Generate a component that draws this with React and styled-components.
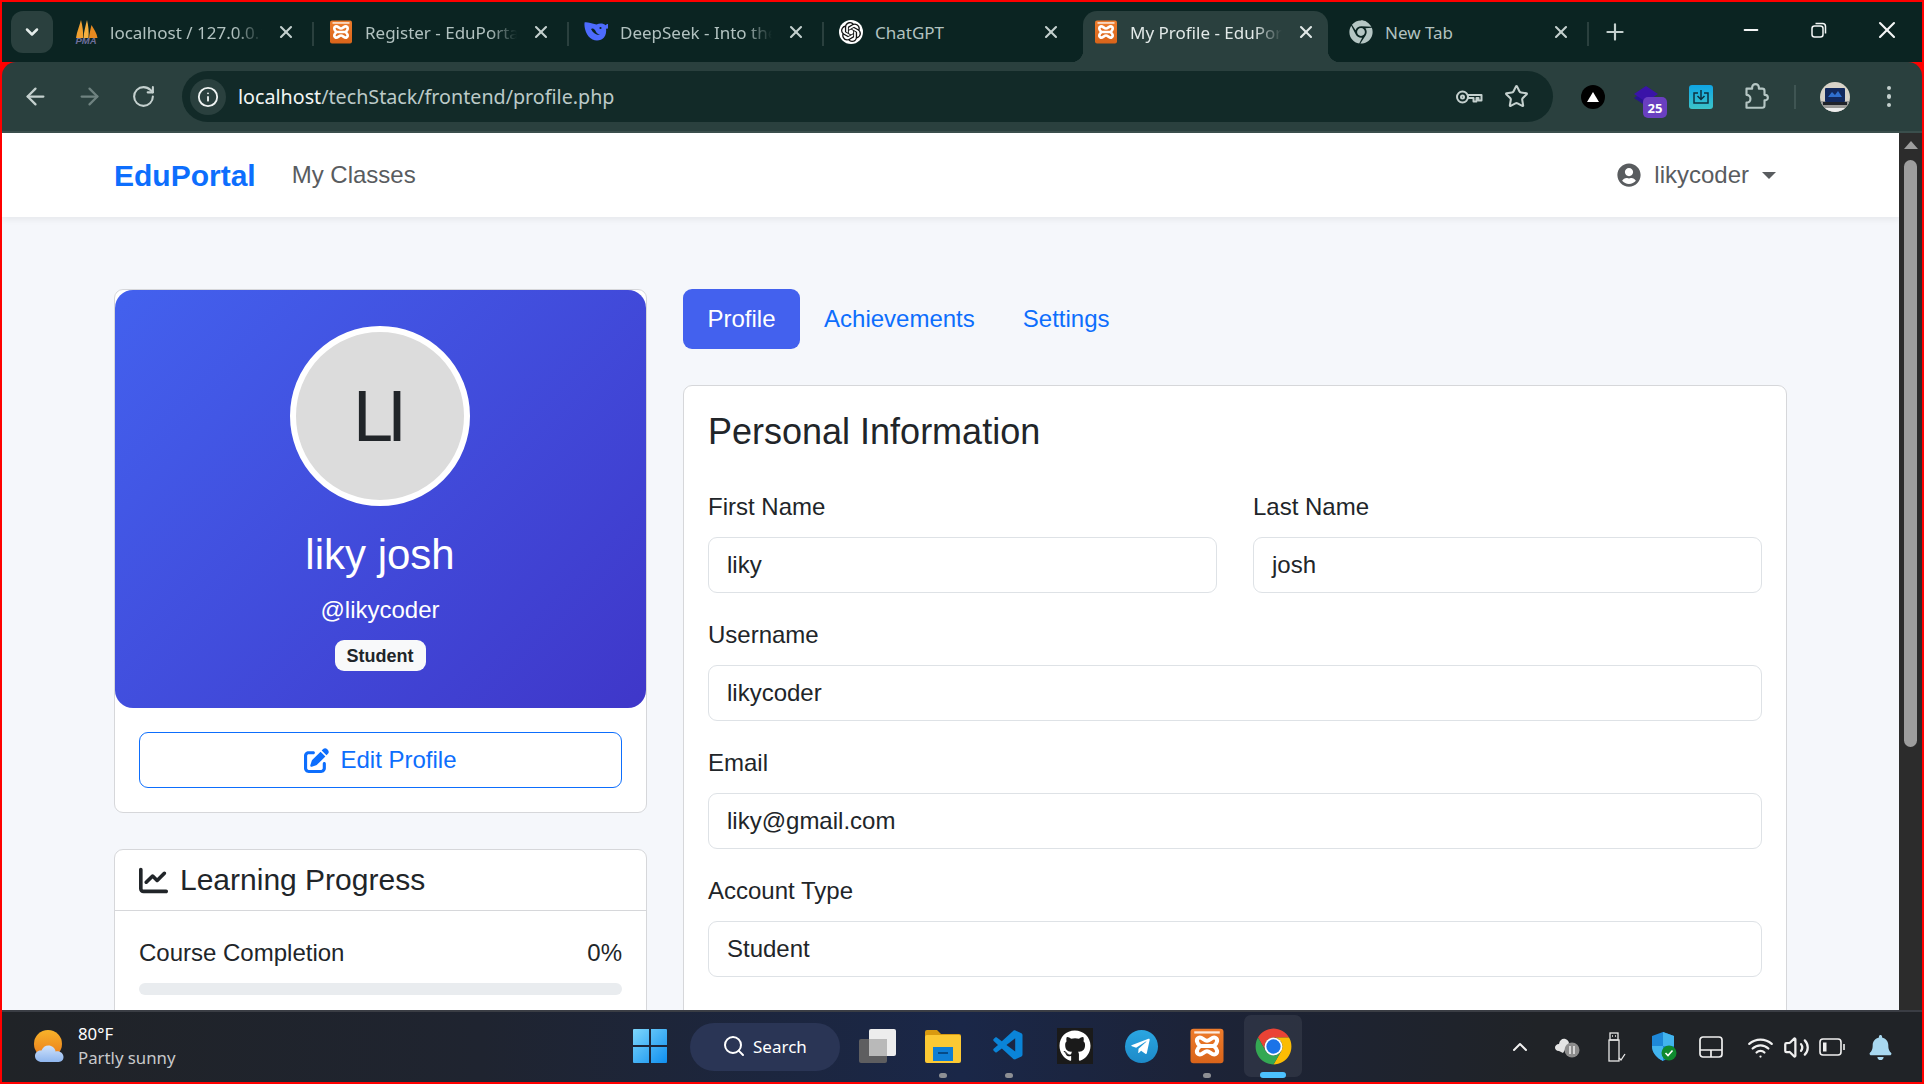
import React from "react";
import styled, { createGlobalStyle } from "styled-components";
import {
  ArrowLeft,
  ArrowRight,
  RotateCw,
  Info,
  Star,
  ChevronDown,
  ChevronUp,
  X,
  Plus,
  Minus,
  Search,
  Wifi,
  Volume2
} from "lucide-react";
import {
  FaUserCircle,
  FaGithub,
  FaTelegramPlane,
  FaChrome,
  FaBell
} from "react-icons/fa";
import { FaPenToSquare, FaChartLine } from "react-icons/fa6";
import { SiOpenai } from "react-icons/si";
import { VscVscode } from "react-icons/vsc";

const UI_FONT = `"Noto Sans", "Open Sans", sans-serif`;
const PAGE_FONT = `"Liberation Sans", Arial, sans-serif`;

const GlobalStyle = createGlobalStyle`
  html, body {
    margin: 0;
    padding: 0;
    overflow: hidden;
    background: #ff0000;
  }
  * { box-sizing: border-box; }
`;

/* ---------- logos ---------- */

const Xampp = ({ size = 24 }) => (
  <svg width={size} height={size} viewBox="0 0 24 24">
    <defs>
      <linearGradient id="xamppBg" x1="0" y1="0" x2="0" y2="1">
        <stop offset="0" stopColor="#ee7c2c" />
        <stop offset="1" stopColor="#d9641a" />
      </linearGradient>
    </defs>
    <rect x="1" y="0.5" width="22" height="23" rx="2" fill="url(#xamppBg)" />
    <path
      d="M6.5 6.5C8.5 5.5 10 8.500 12 8.500s3.500-3 5.500-2 1.500 3.500-1 5.500c2.500 2 3 4.500 1 5.500s-3.500-2-5.500-2-3.500 3-5.500 2-1.500-3.500 1-5.500c-2.500-2-3-4.500-1-5.500zM8 12h8"
      fill="none"
      stroke="#fff"
      strokeWidth="2.700"
      strokeLinejoin="round"
    />
    <rect x="3.500" y="2.200" width="17" height="1.500" fill="#fff" opacity="0.85" />
  </svg>
);

const Pma = () => (
  <svg width="26" height="25" viewBox="0 0 26 25">
    <path d="M3 18 C4 11 6.500 6 8 0 C9.500 6 10.500 12 10 18 Z" fill="#f0a030" />
    <path d="M10.500 18 C11 11 12.500 6 14 0 C15.500 6 16 12 15.500 18 Z" fill="#f5b040" />
    <path d="M16 18 C16.500 13 17.500 9 18.500 5 C21 9 24 14 24.500 18 Z" fill="#e88a20" />
    <text x="13" y="24" textAnchor="middle" fontFamily={PAGE_FONT} fontWeight="700" fontStyle="italic" fontSize="9.500" fill="#6f6f9c">
      PMA
    </text>
  </svg>
);

const Whale = () => (
  <svg width="26" height="24" viewBox="0 0 26 24">
    <path
      d="M25 4c-1 0-1.600.6-2.300 1.200C20.500 3.500 17 3 13.500 4.500 8 3 3 1.500 1.500 2.500 1 8 3 16 9.500 19.500c4 2 9 1 11.500-2 2-2.500 2.500-6 2-9 1 .5 2 .1 2-.8z"
      fill="#4d6bfe"
    />
    <path d="M8 9c2 4 5 6 9 6-3-1-4-3-5-5-1-1.500-3-2-4-1z" fill="#0b2422" />
    <circle cx="17.500" cy="8" r="1.100" fill="#0b2422" />
  </svg>
);

const ChromeLogo = ({ size = 36 }) => (
  <svg width={size} height={size} viewBox="0 0 48 48">
    <path d="M6.680 14A20 20 0 0 1 41.320 14H24A10 10 0 0 0 15.340 29Z" fill="#ea4335" />
    <path d="M41.320 14A20 20 0 0 1 24 44L32.660 29A10 10 0 0 0 24 14Z" fill="#fbbc04" />
    <path d="M24 44A20 20 0 0 1 6.680 14L15.340 29A10 10 0 0 0 32.660 29Z" fill="#34a853" />
    <circle cx="24" cy="24" r="10" fill="#fff" />
    <circle cx="24" cy="24" r="8" fill="#1a73e8" />
  </svg>
);

const KeyIcon = () => (
  <svg width="28" height="18" viewBox="0 0 28 18" fill="none" stroke="#c4d0ce" strokeWidth="2">
    <circle cx="7.500" cy="9" r="5.500" />
    <circle cx="7.500" cy="9" r="1.500" />
    <path d="M13 7h13.500v5.500h-3V10h-2v3.500h-3V10H13" strokeLinejoin="round" />
  </svg>
);

const Puzzle = () => (
  <svg width="27" height="27" viewBox="0 0 24 24" fill="none" stroke="#b5c6c4" strokeWidth="1.900" strokeLinejoin="round">
    <path d="M4 5h5V4a3 3 0 0 1 6 0v1h3a2 2 0 0 1 2 2v3.500h.5a2.500 2.500 0 0 1 0 5H20V20a2 2 0 0 1-2 2H4v-4.500c2.500 0 3.500-1.500 3.500-3.500S6 10.500 4 10.500z" />
  </svg>
);

const StackBadge = () => (
  <svg width="26" height="24" viewBox="0 0 26 24">
    <path d="M0 13 L9 7 L18 13 L9 19 Z" fill="#27158f" />
    <path d="M0 9 L12 1 L24 9 L12 17 Z" fill="#3a13a8" />
  </svg>
);

const SaveExt = () => (
  <svg width="24" height="24" viewBox="0 0 24 24">
    <defs>
      <linearGradient id="saveBg" x1="0" y1="0" x2="0" y2="1">
        <stop offset="0" stopColor="#0fa5e4" />
        <stop offset="1" stopColor="#3cc4c8" />
      </linearGradient>
    </defs>
    <rect width="24" height="24" rx="3" fill="url(#saveBg)" />
    <path d="M9 8H5v10h14V8h-4M12 5v9M8.500 11l3.500 3.500 3.500-3.500" fill="none" stroke="#0d3040" strokeWidth="1.500" />
  </svg>
);

const ProfilePhoto = () => (
  <svg width="30" height="30" viewBox="0 0 30 30">
    <defs>
      <clipPath id="photoClip">
        <circle cx="15" cy="15" r="15" />
      </clipPath>
    </defs>
    <g clipPath="url(#photoClip)">
      <rect width="30" height="30" fill="#d8d3c8" />
      <rect y="19" width="30" height="11" fill="#9a9a98" />
      <rect x="5" y="6" width="20" height="14" rx="1" fill="#12295e" />
      <path d="M8 15l4-5 3 3 3-4 4 6z" fill="#2f6fd0" />
      <rect x="3" y="20" width="24" height="3" fill="#20232a" />
      <rect y="26" width="30" height="4" fill="#eeeeee" />
    </g>
  </svg>
);

const WeatherIcon = () => (
  <svg width="36" height="36" viewBox="0 0 36 36">
    <defs>
      <linearGradient id="sunFill" x1="0" y1="0" x2="0" y2="1">
        <stop offset="0" stopColor="#f8b32a" />
        <stop offset="1" stopColor="#ea7a1c" />
      </linearGradient>
      <linearGradient id="cloudFill" x1="0" y1="0" x2="0" y2="1">
        <stop offset="0" stopColor="#cfe2fb" />
        <stop offset="1" stopColor="#8fb6ee" />
      </linearGradient>
    </defs>
    <circle cx="16" cy="15" r="14" fill="url(#sunFill)" />
    <path d="M10 33c-4 0-7-2.500-7-6s3-6 6.500-5.500C11 17.500 15 15.500 19 17c3 1 4.500 3.500 4.500 5.500 4-1 8 1.500 8 5.500s-3 5-6 5z" fill="url(#cloudFill)" />
  </svg>
);

const WindowsLogo = () => (
  <svg width="36" height="36" viewBox="0 0 36 36">
    <defs>
      <linearGradient id="winFill" x1="0" y1="0" x2="1" y2="1">
        <stop offset="0" stopColor="#7dd6fb" />
        <stop offset="1" stopColor="#0f8ff0" />
      </linearGradient>
    </defs>
    <path d="M1 2a1 1 0 0 1 1-1h15v16H1zM19 1h15a1 1 0 0 1 1 1v15H19zM1 19h16v16H2a1 1 0 0 1-1-1zM19 19h16v15a1 1 0 0 1-1 1H19z" fill="url(#winFill)" />
  </svg>
);

const TaskView = () => (
  <svg width="38" height="34" viewBox="0 0 38 34">
    <rect x="1" y="10" width="28" height="24" rx="2" fill="#5e5e60" />
    <rect x="11" y="0" width="27" height="27" rx="2" fill="#ededed" />
    <rect x="11" y="10" width="18" height="17" fill="#b9b9b9" />
  </svg>
);

const Folder = () => (
  <svg width="38" height="34" viewBox="0 0 38 34">
    <path d="M1 3a2 2 0 0 1 2-2h10l4 4h18a2 2 0 0 1 2 2v5H1z" fill="#d99a10" />
    <rect x="1" y="6" width="36" height="28" rx="2" fill="#fcc934" />
    <path d="M9 18h20v14H9z" fill="#0f7ed4" />
    <rect x="14" y="23" width="10" height="2" fill="#064a86" />
  </svg>
);

const CloudTray = () => (
  <svg width="26" height="24" viewBox="0 0 26 24">
    <path d="M5 16c-3 0-4-2-4-3.500S2.500 9 5 9c.5-4 3.500-6 6.500-5 2 .6 3.500 2.500 3.500 4.500L9 18z" fill="#e4e4e4" />
    <circle cx="18" cy="15" r="7.500" fill="#8d8d8d" />
    <path d="M16 11v8M20 11v8" stroke="#e8e8e8" strokeWidth="1.600" />
  </svg>
);

const UsbTray = () => (
  <svg width="22" height="30" viewBox="0 0 22 30" fill="none" stroke="#e8e8e8" strokeWidth="1.300">
    <rect x="3" y="8" width="10" height="21" />
    <rect x="4" y="1" width="8" height="7" />
    <path d="M6 4h1M9 4h1M13 26l2 2 4-6" />
  </svg>
);

const ShieldTray = () => (
  <svg width="26" height="30" viewBox="0 0 26 30">
    <path d="M12 0l11 4v10c0 7-5 12-11 15C6 26 1 21 1 14V4z" fill="#1e88d8" />
    <path d="M12 0l11 4v10H12zM12 14v15C6 26 1 21 1 14z" fill="#42b4ee" />
    <circle cx="18" cy="21" r="7.500" fill="#0f8a2e" />
    <path d="M14.500 21l2.500 2.500 4.500-5" stroke="#fff" strokeWidth="1.600" fill="none" />
  </svg>
);

const PadTray = () => (
  <svg width="24" height="22" viewBox="0 0 24 22" fill="none" stroke="#f0f0f0" strokeWidth="1.700">
    <rect x="1" y="1" width="22" height="20" rx="3" />
    <path d="M1 14h22M12 14v7" />
  </svg>
);

const BatteryTray = () => (
  <svg width="26" height="18" viewBox="0 0 26 18" fill="none" stroke="#f0f0f0" strokeWidth="1.600">
    <rect x="1" y="1" width="21" height="16" rx="3" />
    <path d="M25 6v6" />
    <rect x="4" y="4.500" width="3.500" height="9" fill="#f0f0f0" stroke="none" />
  </svg>
);

/* ---------- browser chrome ---------- */

const Frame = styled.div`
  width: 1924px;
  height: 1084px;
  padding: 2px;
  background: #ff0000;
  display: flex;
  flex-direction: column;
  overflow: hidden;
`;

const TabStrip = styled.div`
  height: 60px;
  flex: none;
  background: #0b2422;
  display: flex;
  align-items: flex-start;
  font-family: ${UI_FONT};
`;

const TabSearch = styled.div`
  width: 42px;
  height: 42px;
  margin: 9px 10px 0 9px;
  flex: none;
  border-radius: 12px;
  background: #2a403e;
  color: #e4ecea;
  display: flex;
  align-items: center;
  justify-content: center;
`;

const TabSlot = styled.div`
  width: 255px;
  height: 60px;
  flex: none;
  display: flex;
  align-items: flex-start;
  padding-top: 9px;
`;

const Tab = styled.div`
  position: relative;
  width: 245px;
  height: 51px;
  flex: none;
  padding: 0 12px 9px 10px;
  display: flex;
  align-items: center;
  border-radius: 14px 14px 0 0;
  background: ${props => (props.$active ? "#2a403e" : "transparent")};
  ${props =>
    props.$active &&
    `
    &::before, &::after {
      content: "";
      position: absolute;
      bottom: 0;
      width: 12px;
      height: 12px;
    }
    &::before { left: -12px; background: radial-gradient(circle at 0 0, transparent 12px, #2a403e 12.5px); }
    &::after { right: -12px; background: radial-gradient(circle at 100% 0, transparent 12px, #2a403e 12.5px); }
  `}
`;

const Favicon = styled.span`
  width: 26px;
  height: 30px;
  flex: none;
  display: flex;
  align-items: center;
  justify-content: center;
`;

const GptDisc = styled.span`
  width: 24px;
  height: 24px;
  border-radius: 50%;
  background: #fff;
  color: #111;
  display: flex;
  align-items: center;
  justify-content: center;
`;

const TabTitle = styled.span`
  flex: 1;
  min-width: 0;
  margin-left: 11px;
  font-size: 17px;
  white-space: nowrap;
  overflow: hidden;
  color: ${props => (props.$active ? "#e2e9e8" : "#b2c2c0")};
  mask-image: ${props =>
    props.$fade ? "linear-gradient(to right, #000 82%, transparent 100%)" : "none"};
`;

const TabClose = styled.span`
  width: 20px;
  height: 20px;
  margin-left: 14px;
  flex: none;
  color: ${props => (props.$active ? "#e2e9e8" : "#c4d0ce")};
  display: flex;
  align-items: center;
  justify-content: center;
`;

const TabSep = styled.span`
  width: 2px;
  height: 24px;
  margin: 11px 4px 0 4px;
  flex: none;
  background: ${props => (props.$hidden ? "transparent" : "#2a403e")};
`;

const NewTab = styled.div`
  width: 34px;
  height: 34px;
  margin: 13px 0 0 5px;
  flex: none;
  color: #c4d0ce;
  display: flex;
  align-items: center;
  justify-content: center;
`;

const WindowControls = styled.div`
  margin-left: auto;
  display: flex;
  color: #f4f6f6;
  margin-right: 1px;
`;

const WindowButton = styled.div`
  width: 68px;
  height: 60px;
  padding-bottom: 4px;
  display: flex;
  align-items: center;
  justify-content: center;
`;

const RestoreIcon = () => (
  <svg width="16" height="16" viewBox="0 0 16 16" fill="none" stroke="#f4f6f6" strokeWidth="1.500">
    <rect x="1" y="4" width="11" height="11" rx="2.500" />
    <path d="M4.500 1.500h7a3 3 0 0 1 3 3v7" />
  </svg>
);

const Toolbar = styled.div`
  height: 71px;
  flex: none;
  background: #2a403e;
  border-radius: 14px 14px 0 0;
  border-bottom: 2px solid #3a4e4c;
  padding: 9px 6px 9px 6px;
  display: flex;
  align-items: center;
  font-family: ${UI_FONT};
`;

const ToolButton = styled.div`
  width: 54px;
  height: 51px;
  flex: none;
  position: relative;
  display: flex;
  align-items: center;
  justify-content: center;
  color: ${props => (props.$dim ? "#6f8280" : "#c4d0ce")};
`;

const Omnibox = styled.div`
  flex: 1;
  height: 51px;
  margin: 0 13px 0 12px;
  border-radius: 26px;
  background: #122a28;
  padding: 0 24px 0 8px;
  display: flex;
  align-items: center;
`;

const SiteInfo = styled.div`
  width: 36px;
  height: 36px;
  border-radius: 50%;
  background: #2a403e;
  color: #f0f4f3;
  display: flex;
  align-items: center;
  justify-content: center;
  flex: none;
`;

const Url = styled.div`
  margin-left: 12px;
  font-size: 19.700px;
  color: #bccac8;
  white-space: nowrap;
  flex: 1;
`;

const UrlHost = styled.span`
  color: #f2f6f5;
`;

const OmniIcon = styled.span`
  margin-left: ${props => props.$gap || 0}px;
  color: #c4d0ce;
  display: flex;
  align-items: center;
`;

const BlackDot = styled.span`
  width: 24px;
  height: 24px;
  border-radius: 50%;
  background: #000;
  display: flex;
  align-items: center;
  justify-content: center;
  &::after {
    content: "";
    border-left: 6px solid transparent;
    border-right: 6px solid transparent;
    border-bottom: 10px solid #fff;
  }
`;

const CountBadge = styled.span`
  position: absolute;
  left: 23px;
  top: 26px;
  width: 24px;
  height: 21px;
  border-radius: 5px;
  background: #6a3fc0;
  color: #fff;
  font-size: 13px;
  font-weight: 700;
  display: flex;
  align-items: center;
  justify-content: center;
`;

const ToolSep = styled.span`
  width: 2px;
  height: 24px;
  margin: 0 12px 0 12px;
  flex: none;
  background: #3f5553;
`;

const Dots = styled.span`
  display: flex;
  flex-direction: column;
  gap: 4px;
  & > i {
    width: 4.500px;
    height: 4.500px;
    border-radius: 50%;
    background: #c4d0ce;
  }
`;

/* ---------- page ---------- */

const Viewport = styled.div`
  flex: 1;
  min-height: 0;
  display: flex;
`;

const Page = styled.div`
  flex: 1;
  min-width: 0;
  overflow: hidden;
  background: #f5f7fb;
  font-family: ${PAGE_FONT};
  font-size: 24px;
  line-height: 36px;
  color: #212529;
`;

const Scrollbar = styled.div`
  width: 23px;
  flex: none;
  background: #2c2c2c;
  padding: 8px 5px 0 5px;
  display: flex;
  flex-direction: column;
  align-items: center;
`;

const ScrollArrow = styled.span`
  border-left: 7px solid transparent;
  border-right: 7px solid transparent;
  border-bottom: 8px solid #9e9e9e;
`;

const ScrollThumb = styled.div`
  width: 13px;
  height: 587px;
  margin-top: 11px;
  border-radius: 7px;
  background: #9e9e9e;
`;

const Navbar = styled.nav`
  height: 84px;
  padding: 0 112px;
  background: #fff;
  box-shadow: 0 3px 6px rgba(0, 0, 0, 0.06);
  display: flex;
  align-items: center;
`;

const Brand = styled.div`
  font-size: 30px;
  font-weight: 700;
  color: #0d6efd;
  margin-top: 2px;
`;

const NavLink = styled.div`
  margin-left: 36px;
  color: #595c5f;
`;

const UserMenu = styled.div`
  margin-left: auto;
  padding-right: 11px;
  display: flex;
  align-items: center;
  color: #595c5f;
`;

const UserName = styled.span`
  margin-left: 13px;
`;

const Caret = styled.span`
  margin-left: 13px;
  border-left: 7px solid transparent;
  border-right: 7px solid transparent;
  border-top: 7px solid #595c5f;
`;

const Content = styled.div`
  padding: 72px 112px 0;
  display: grid;
  grid-template-columns: 533px 1fr;
  column-gap: 36px;
  align-items: start;
`;

const Card = styled.section`
  background: #fff;
  border: 1px solid #d6d7da;
  border-radius: 9px;
  margin-bottom: 36px;
`;

const Hero = styled.div`
  height: 418px;
  padding: 36px 1px 0 0;
  border-radius: 18px;
  background: linear-gradient(135deg, #4361ee, #3f37c9);
  color: #fff;
  display: flex;
  flex-direction: column;
  align-items: center;
`;

const Avatar = styled.div`
  width: 180px;
  height: 180px;
  flex: none;
  border-radius: 50%;
  border: 6px solid #fff;
  background: #dcdcdc;
  color: #212529;
  font-size: 72px;
  letter-spacing: -6px;
  padding-right: 6px;
  display: flex;
  align-items: center;
  justify-content: center;
`;

const HeroName = styled.h3`
  margin: 24px 0 12px;
  font-size: 42px;
  font-weight: 400;
  line-height: 50px;
`;

const HeroHandle = styled.div`
  margin-bottom: 12px;
`;

const Badge = styled.span`
  height: 31px;
  width: 91px;
  border-radius: 9px;
  background: #f8f9fa;
  color: #212529;
  font-size: 18px;
  font-weight: 700;
  line-height: 33px;
  text-align: center;
`;

const CardActions = styled.div`
  padding: 24px;
`;

const EditButton = styled.div`
  height: 56px;
  border: 1px solid #0d6efd;
  border-radius: 9px;
  color: #0d6efd;
  display: flex;
  align-items: center;
  justify-content: center;
  gap: 11px;
`;

const CardHeader = styled.div`
  height: 61px;
  padding: 0 24px;
  border-bottom: 1px solid #d6d7da;
  display: flex;
  align-items: center;
  gap: 12px;
  font-size: 30px;
`;

const CardBody = styled.div`
  padding: 24px;
`;

const ProgressRow = styled.div`
  display: flex;
  justify-content: space-between;
  margin-bottom: 12px;
`;

const ProgressBar = styled.div`
  height: 12px;
  border-radius: 6px;
  background: #e9ecef;
`;

const Tabs = styled.div`
  display: flex;
  margin-bottom: 36px;
`;

const Pill = styled.div`
  height: 60px;
  padding: 12px ${props => (props.$active ? 24.5 : 24)}px;
  border-radius: 9px;
  background: ${props => (props.$active ? "#4361ee" : "transparent")};
  color: ${props => (props.$active ? "#fff" : "#0d6efd")};
`;

const FormCard = styled(Card)`
  padding: 24px;
`;

const FormTitle = styled.h4`
  margin: 0 0 36px;
  font-size: 36px;
  font-weight: 400;
  line-height: 43px;
`;

const FormRow = styled.div`
  display: grid;
  grid-template-columns: 1fr 1fr;
  column-gap: 36px;
`;

const Field = styled.div`
  margin-bottom: 24px;
`;

const Label = styled.div`
  margin-bottom: 12px;
`;

const FieldValue = styled.div`
  height: 56px;
  padding: 0 18px;
  border: 1px solid #dee2e6;
  border-radius: 9px;
  background: #fff;
  line-height: 54px;
`;

/* ---------- taskbar ---------- */

const Taskbar = styled.div`
  height: 72px;
  flex: none;
  border-top: 2px solid #3a3d44;
  background: linear-gradient(90deg, #202327 0%, #1f2430 25%, #1a2748 50%, #1c2338 62%, #202327 80%);
  padding-left: 615px;
  position: relative;
  display: flex;
  align-items: center;
  font-family: ${UI_FONT};
  color: #fff;
`;

const Weather = styled.div`
  position: absolute;
  left: 30px;
  top: 0;
  height: 70px;
  display: flex;
  align-items: center;
  gap: 10px;
`;

const WeatherText = styled.div`
  font-size: 16.800px;
  line-height: 24px;
  padding-bottom: 2px;
`;

const WeatherNote = styled.div`
  color: #c8c9cb;
`;

const AppSlot = styled.div`
  width: ${props => (props.$active ? 58 : 66)}px;
  height: 62px;
  flex: none;
  border-radius: 7px;
  position: relative;
  display: flex;
  align-items: center;
  justify-content: center;
  margin: 0 ${props => (props.$active ? 4 : 0)}px 2px;
  background: ${props => (props.$active ? "rgba(255,255,255,0.07)" : "transparent")};
`;

const RunDot = styled.span`
  position: absolute;
  bottom: -1px;
  left: 50%;
  margin-left: ${props => (props.$wide ? -13 : -4)}px;
  width: ${props => (props.$wide ? 26 : 8)}px;
  height: ${props => (props.$wide ? 6 : 5)}px;
  border-radius: 3px;
  background: ${props => (props.$wide ? "#4cc2ff" : "#8d8f94")};
`;

const SearchPill = styled.div`
  width: 150px;
  height: 48px;
  margin: 0 4px 0 7px;
  flex: none;
  border-radius: 24px;
  background: #2a3555;
  padding: 0 0 2px 32px;
  display: flex;
  align-items: center;
  gap: 7px;
  font-size: 17px;
`;

const GithubTile = styled.span`
  width: 36px;
  height: 36px;
  background: #1a1a1a;
  color: #fff;
  display: flex;
  align-items: center;
  justify-content: center;
`;

const TelegramDot = styled.span`
  width: 33px;
  height: 33px;
  border-radius: 50%;
  background: linear-gradient(#2aa6e2, #1d8ac8);
  color: #fff;
  display: flex;
  align-items: center;
  justify-content: center;
  padding-right: 2px;
`;

const Tray = styled.div`
  margin-left: auto;
  margin-right: 16px;
  display: flex;
  align-items: center;
  color: #f0f0f0;
`;

const TrayItem = styled.div`
  width: ${props => props.$w}px;
  height: 48px;
  display: flex;
  align-items: center;
  justify-content: center;
`;

const tabs = [
  { title: "localhost / 127.0.0.1", icon: <Pma />, fade: true },
  { title: "Register - EduPortal", icon: <Xampp />, fade: true },
  { title: "DeepSeek - Into the Unknown", icon: <Whale />, fade: true },
  { title: "ChatGPT", icon: <GptDisc><SiOpenai size={20} /></GptDisc> },
  { title: "My Profile - EduPortal", icon: <Xampp />, fade: true, active: true },
  { title: "New Tab", icon: <FaChrome size={24} color="#b5c6c4" /> }
];

const Input = ({ label, value }) => (
  <Field>
    <Label>{label}</Label>
    <FieldValue>{value}</FieldValue>
  </Field>
);

export default function App() {
  return (
    <Frame>
      <GlobalStyle />
      <TabStrip>
        <TabSearch>
          <ChevronDown size={20} strokeWidth={3} />
        </TabSearch>
        {tabs.map((tab, i) => (
          <TabSlot key={tab.title}>
            <Tab $active={tab.active}>
              <Favicon>{tab.icon}</Favicon>
              <TabTitle $active={tab.active} $fade={tab.fade}>{tab.title}</TabTitle>
              <TabClose $active={tab.active}>
                <X size={20} strokeWidth={2.500} />
              </TabClose>
            </Tab>
            <TabSep $hidden={tab.active || i === 3} />
          </TabSlot>
        ))}
        <NewTab>
          <Plus size={26} strokeWidth={2} />
        </NewTab>
        <WindowControls>
          <WindowButton><Minus size={22} strokeWidth={2} /></WindowButton>
          <WindowButton><RestoreIcon /></WindowButton>
          <WindowButton><X size={28} strokeWidth={1.800} /></WindowButton>
        </WindowControls>
      </TabStrip>

      <Toolbar>
        <ToolButton><ArrowLeft size={27} /></ToolButton>
        <ToolButton $dim><ArrowRight size={27} /></ToolButton>
        <ToolButton><RotateCw size={25} /></ToolButton>
        <Omnibox>
          <SiteInfo><Info size={22} /></SiteInfo>
          <Url>
            <UrlHost>localhost</UrlHost>/techStack/frontend/profile.php
          </Url>
          <OmniIcon><KeyIcon /></OmniIcon>
          <OmniIcon $gap={21}><Star size={25} /></OmniIcon>
        </Omnibox>
        <ToolButton><BlackDot /></ToolButton>
        <ToolButton>
          <StackBadge />
          <CountBadge>25</CountBadge>
        </ToolButton>
        <ToolButton><SaveExt /></ToolButton>
        <ToolButton><Puzzle /></ToolButton>
        <ToolSep />
        <ToolButton><ProfilePhoto /></ToolButton>
        <ToolButton>
          <Dots><i /><i /><i /></Dots>
        </ToolButton>
      </Toolbar>

      <Viewport>
        <Page>
          <Navbar>
            <Brand>EduPortal</Brand>
            <NavLink>My Classes</NavLink>
            <UserMenu>
              <FaUserCircle size={24} />
              <UserName>likycoder</UserName>
              <Caret />
            </UserMenu>
          </Navbar>
          <Content>
            <div>
              <Card>
                <Hero>
                  <Avatar>LI</Avatar>
                  <HeroName>liky josh</HeroName>
                  <HeroHandle>@likycoder</HeroHandle>
                  <Badge>Student</Badge>
                </Hero>
                <CardActions>
                  <EditButton>
                    <FaPenToSquare size={25} />
                    Edit Profile
                  </EditButton>
                </CardActions>
              </Card>
              <Card>
                <CardHeader>
                  <FaChartLine size={29} />
                  Learning Progress
                </CardHeader>
                <CardBody>
                  <ProgressRow>
                    <span>Course Completion</span>
                    <span>0%</span>
                  </ProgressRow>
                  <ProgressBar />
                </CardBody>
              </Card>
            </div>
            <div>
              <Tabs>
                <Pill $active>Profile</Pill>
                <Pill>Achievements</Pill>
                <Pill>Settings</Pill>
              </Tabs>
              <FormCard>
                <FormTitle>Personal Information</FormTitle>
                <FormRow>
                  <Input label="First Name" value="liky" />
                  <Input label="Last Name" value="josh" />
                </FormRow>
                <Input label="Username" value="likycoder" />
                <Input label="Email" value="liky@gmail.com" />
                <Input label="Account Type" value="Student" />
              </FormCard>
            </div>
          </Content>
        </Page>
        <Scrollbar>
          <ScrollArrow />
          <ScrollThumb />
        </Scrollbar>
      </Viewport>

      <Taskbar>
        <Weather>
          <WeatherIcon />
          <WeatherText>
            <div>80°F</div>
            <WeatherNote>Partly sunny</WeatherNote>
          </WeatherText>
        </Weather>
        <AppSlot><WindowsLogo /></AppSlot>
        <SearchPill>
          <Search size={24} strokeWidth={2} />
          Search
        </SearchPill>
        <AppSlot><TaskView /></AppSlot>
        <AppSlot><Folder /><RunDot /></AppSlot>
        <AppSlot><VscVscode size={36} color="#0a84d8" /><RunDot /></AppSlot>
        <AppSlot><GithubTile><FaGithub size={32} /></GithubTile></AppSlot>
        <AppSlot><TelegramDot><FaTelegramPlane size={21} /></TelegramDot></AppSlot>
        <AppSlot><Xampp size={36} /><RunDot /></AppSlot>
        <AppSlot $active><ChromeLogo size={43} /><RunDot $wide /></AppSlot>
        <Tray>
          <TrayItem $w={48}><ChevronUp size={24} strokeWidth={2} /></TrayItem>
          <TrayItem $w={46}><CloudTray /></TrayItem>
          <TrayItem $w={54}><UsbTray /></TrayItem>
          <TrayItem $w={40}><ShieldTray /></TrayItem>
          <TrayItem $w={54}><PadTray /></TrayItem>
          <TrayItem $w={44}><Wifi size={27} /></TrayItem>
          <TrayItem $w={28}><Volume2 size={27} /></TrayItem>
          <TrayItem $w={44}><BatteryTray /></TrayItem>
          <TrayItem $w={52}><FaBell size={25} color="#a8d8f0" /></TrayItem>
        </Tray>
      </Taskbar>
    </Frame>
  );
}
